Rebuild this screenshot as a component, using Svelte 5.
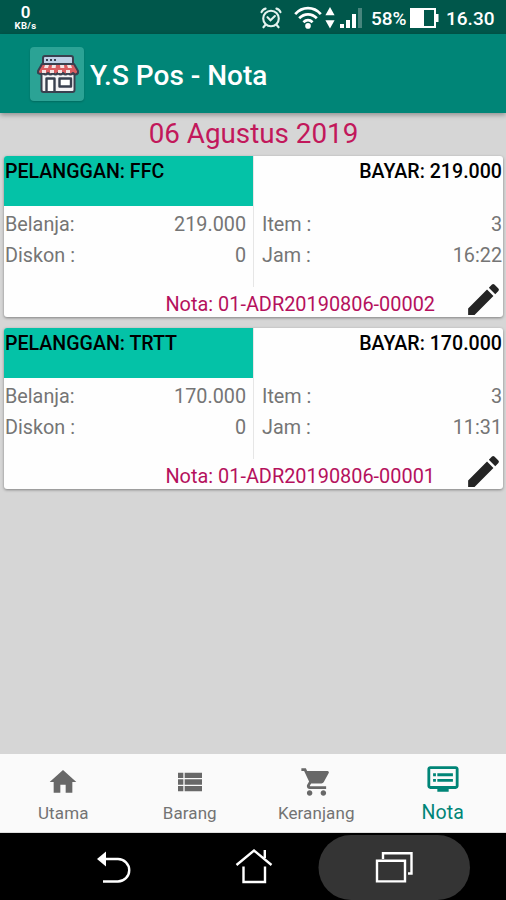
<script>
  const notes = [
    { customer: 'FFC', total: '219.000', items: 3, time: '16:22', number: '01-ADR20190806-00002' },
    { customer: 'TRTT', total: '170.000', items: 3, time: '11:31', number: '01-ADR20190806-00001' },
  ];
</script>

<div class="screen">
  <div class="status">
    <div class="speed"><b>0</b><span>KB/s</span></div>
    <div class="indicators">
      <svg class="alarm" width="22" height="22" viewBox="0 0 22 22" fill="none" stroke="#e4f3ef" stroke-width="2.1" stroke-linecap="round">
        <circle cx="11" cy="11.5" r="7.8" />
        <path d="M1.500 5.200C2.200 3.400 3.700 2 5.600 1.600M20.500 5.200C19.800 3.400 18.300 2 16.400 1.600M5.500 17.800L3.400 20.300M16.500 17.800l2.100 2.500M7.500 10.200l3 3 4.400-4.200" />
      </svg>
      <svg class="wifi" width="28" height="23" viewBox="0 0 28 23" fill="none" stroke="#fff" stroke-width="2.7">
        <path d="M1.200 8.200C8.300.2 19.700.2 26.800 8.200M5.200 12.300c5-5.300 12.600-5.300 17.600 0M9.400 16.200c2.800-2.700 6.400-2.700 9.200 0" />
        <circle cx="14" cy="19.900" r="2.800" fill="#fff" stroke="none" />
      </svg>
      <svg class="data" width="10" height="22" viewBox="0 0 10 22" fill="#fff"><path d="M5 0l4.600 8.200H.4zM5 21.500L.4 13.300h9.200z" /></svg>
      <svg class="signal" width="23" height="22" viewBox="0 0 23 22" fill="#fff">
        <path d="M0 17h4v4H0zM6 13h4v8H6zM12 7h4v14h-4z" />
        <path d="M18 1h4v20h-4z" opacity=".28" />
      </svg>
      <span class="percent">58%</span>
      <svg class="battery" width="29" height="20" viewBox="0 0 29 20">
        <path d="M1 1h24v18H1z" fill="none" stroke="#fff" stroke-width="2" />
        <path d="M1 1h13v18H1zM25 6h3.500v8H25z" fill="#fff" />
      </svg>
      <span class="clock">16.30</span>
    </div>
  </div>

  <header>
    <div class="logo">
      <svg width="44" height="40" viewBox="0 0 44 40" stroke="#39404f" stroke-width="2" stroke-linejoin="round">
        <path d="M5.500 18h33v18q0 2-2 2h-29q-2 0-2-2z" fill="#f4f3f5" />
        <path d="M9 2h26q2 0 2 2v8H7V4q0-2 2-2z" fill="#bed1e6" />
        <path d="M10 6h2M14 6h2M18 6h2" />
        <path d="M6 10h32l4 7v2q-2.500 3-5 0-2.500 3-5 0-2.500 3-5 0-2.500 3-5 0-2.500 3-5 0-2.500 3-5 0-2.500 3-5 0-2 2-5 0v-2z" fill="#d95d61" />
        <path d="M9 11h4l-1 3H8zM16 11h4l-.4 3h-4zM24 11h4l.4 3h-4zM31 11h4l1 3h-4zM6 16h4v3H6zM14 16h4v3h-4zM22 16h4v3h-4zM30 16h4v3h-4z" fill="#f5e4e4" stroke="none" />
        <path d="M10.500 37V24.500h8V37M23.500 24.500h11.500v8H23.500z" fill="#fff" stroke-width="2.400" />
      </svg>
    </div>
    <h1>Y.S Pos - Nota</h1>
  </header>

  <main>
    <h2>06 Agustus 2019</h2>
    {#each notes as note}
      <article>
        <div class="columns">
          <section class="left">
            <div class="customer"><span>PELANGGAN: {note.customer}</span></div>
            <div class="rows">
              <div class="row"><span>Belanja:</span><span>{note.total}</span></div>
              <div class="row"><span>Diskon :</span><span>0</span></div>
            </div>
          </section>
          <section class="right">
            <div class="pay"><span>BAYAR: {note.total}</span></div>
            <div class="rows">
              <div class="row"><span>Item :</span><span>{note.items}</span></div>
              <div class="row"><span>Jam :</span><span>{note.time}</span></div>
            </div>
          </section>
        </div>
        <footer>
          <span>Nota: {note.number}</span>
          <svg width="41" height="41" viewBox="0 0 24 24" fill="#242424"><path d="M3 17.250V21h3.750L17.810 9.940l-3.750-3.750L3 17.250zM20.710 7.040a1 1 0 0 0 0-1.410l-2.340-2.340a1 1 0 0 0-1.410 0l-1.830 1.830 3.750 3.750 1.830-1.830z" /></svg>
        </footer>
      </article>
    {/each}
  </main>

  <nav class="tabs">
    <div class="tab">
      <svg width="32" height="32" viewBox="0 0 24 24"><path d="M10 20v-6h4v6h5v-8h3L12 3 2 12h3v8z" /></svg>
      <span>Utama</span>
    </div>
    <div class="tab">
      <svg width="32" height="32" viewBox="0 0 24 24"><path d="M3 5h4v4H3zM8 5h13v4H8zM3 10h4v4H3zM8 10h13v4H8zM3 15h4v4H3zM8 15h13v4H8z" /></svg>
      <span>Barang</span>
    </div>
    <div class="tab">
      <svg width="33" height="33" viewBox="0 0 24 24"><path d="M7 18c-1.100 0-1.990.9-1.990 2S5.900 22 7 22s2-.9 2-2-.9-2-2-2zM1 2v2h2l3.600 7.590-1.350 2.450c-.16.280-.25.610-.25.960 0 1.100.9 2 2 2h12v-2H7.420c-.14 0-.25-.11-.25-.25l.03-.12.900-1.630h7.450c.75 0 1.410-.41 1.750-1.030l3.580-6.490A1 1 0 0 0 20 4H5.210l-.94-2H1zm16 16c-1.100 0-1.990.9-1.990 2s.89 2 1.990 2 2-.9 2-2-.9-2-2-2z" /></svg>
      <span>Keranjang</span>
    </div>
    <div class="tab active">
      <svg width="34" height="34" viewBox="0 0 24 24"><path d="M21 3H3c-1.100 0-2 .9-2 2v12c0 1.100.9 2 2 2h5v2h8v-2h5c1.100 0 1.990-.9 1.990-2L23 5c0-1.100-.9-2-2-2zm0 14H3V5h18v12zm-2-9H8v2h11V8zm0 4H8v2h11v-2zM7 8H5v2h2V8zm0 4H5v2h2v-2z" /></svg>
      <span>Nota</span>
    </div>
  </nav>

  <div class="system">
    <svg width="506" height="67" viewBox="0 0 506 67" fill="none" stroke="#fff" stroke-width="2.400">
      <rect x="318.500" y="2" width="151.500" height="65" rx="32.500" fill="#343434" stroke="none" />
      <path d="M103 48.500h15a11.200 11.200 0 0 0 0-22.500h-15" />
      <path d="M97 26l9-7.500v15z" fill="#fff" stroke="none" />
      <path d="M236.500 32L254 17.500 271.500 32M243.500 33.500v15.500h21.500V33.500M264.800 17v8" />
      <path d="M377 27.800h28v20.600h-28zM383 26v-5.800h28.500v20.300H408" />
    </svg>
  </div>
</div>

<style>
  :global(body) { margin: 0; }
  .screen {
    width: 506px; height: 900px; overflow: hidden;
    display: flex; flex-direction: column;
    background: #d6d6d6; color: #000; font-family: Roboto, sans-serif;
  }
  .screen * { box-sizing: border-box; }
  svg { display: block; flex: none; }
  span, h1, h2 { white-space: nowrap; }
  .status { height: 34px; flex: none; display: flex; justify-content: space-between; background: #00574b; color: #fff; }
  .speed { width: 27px; margin-left: 12px; padding-top: 5px; display: flex; flex-direction: column; align-items: center; }
  .speed b { font-size: 17px; line-height: 15px; font-weight: 600; }
  .speed span { font-size: 9.500px; line-height: 12px; font-weight: 700; letter-spacing: .4px; }
  .indicators { display: flex; align-items: center; padding: 1px 9px 0 0; font-size: 19px; font-weight: 500; }
  .wifi { margin-left: 12px; }
  .data { margin-left: 3px; }
  .signal { margin-left: 5px; }
  .percent { margin-left: 8px; width: 37px; padding-top: 1px; letter-spacing: -.1px; }
  .battery { margin-left: 2px; }
  .clock { margin-left: 7px; width: 51px; padding-top: 1px; }
  header {
    position: relative; z-index: 1; height: 79px; flex: none; display: flex; align-items: center;
    padding: 0 0 0 30px; background: #008577; box-shadow: 0 2px 5px #0005;
  }
  .logo { width: 54px; height: 54px; display: grid; place-items: center; background: #2ba395; border-radius: 4px; box-shadow: 0 1px 2px #0003; }
  .logo svg { margin-left: 2px; }
  h1 { margin: 4px 0 0 6px; color: #fff; font-size: 28px; line-height: 32px; font-weight: 500; }
  main { flex: 1; min-height: 0; padding: 4px 3px 0 4px; }
  h2 { margin: 0; height: 39px; line-height: 34px; text-align: center; color: #c2185b; font-size: 27.800px; font-weight: 400; }
  article { height: 161px; margin-bottom: 11px; overflow: hidden; border-radius: 3px; background: #fefefe; box-shadow: 0 1px 3px #0006; }
  .columns { display: flex; height: 131px; }
  .left { width: 250px; border-right: 1px solid #e6e6e6; }
  .right { flex: 1; }
  .customer, .pay { height: 50px; padding: 4px 0 0 1px; line-height: 23px; font-size: 19.600px; font-weight: 500; }
  .customer { background: #04c2a7; }
  .pay { display: flex; justify-content: flex-end; padding-right: 1px; }
  .rows { padding: 3px 1px 0 8px; color: #757575; font-size: 19.800px; }
  .left .rows { padding: 3px 7px 0 1px; }
  .row { display: flex; justify-content: space-between; height: 31px; line-height: 31px; }
  footer { height: 30px; display: flex; justify-content: flex-end; align-items: center; color: #b5115d; font-size: 19.900px; }
  footer span { margin-top: 5px; }
  footer svg { margin: -5px -1px 0 28px; }
  .tabs { height: 79px; flex: none; display: flex; background: #fafafa; border-bottom: 1px solid #ddd; }
  .tab { flex: 1; display: flex; flex-direction: column; align-items: center; padding: 11px 0 0; color: #737373; fill: #686868; font-size: 17px; }
  .tab svg { height: 34px; }
  .tab span { margin-top: 4px; line-height: 20px; letter-spacing: .1px; }
  .tab.active { color: #008577; fill: #008577; padding-top: 8px; font-size: 19.500px; }
  .tab.active span { margin-top: 7px; }
  .system { height: 67px; flex: none; background: #000; }
</style>
